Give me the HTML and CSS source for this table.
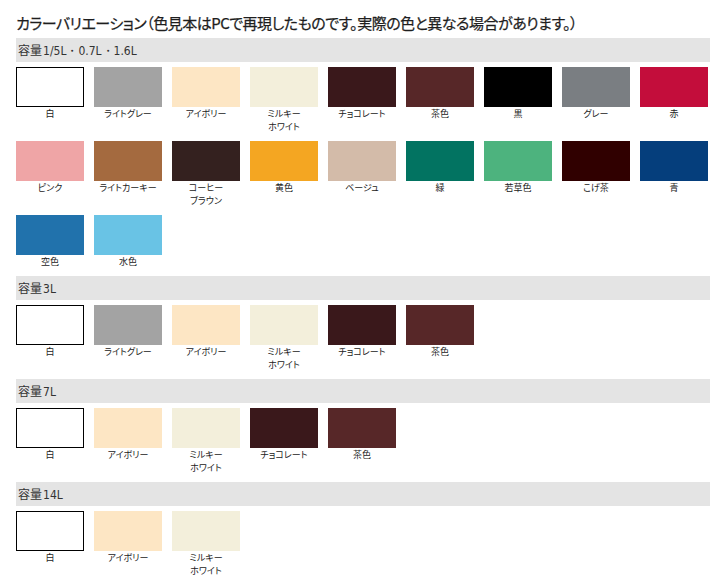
FILE: index.html
```html
<!DOCTYPE html>
<html lang="ja">
<head>
<meta charset="utf-8">
<link rel="stylesheet" href="styles.css">
</head>
<body>
<div class="page">
  <h1 class="title">カラーバリエーション（色見本はPCで再現したものです。実際の色と異なる場合があります。）</h1>

  <section class="group">
    <div class="bar">容量<span class="num">1/5L・0.7L・1.6L</span></div>
    <div class="grid">
      <div class="item"><div class="sw white"></div><div class="lbl">白</div></div>
      <div class="item"><div class="sw lgray"></div><div class="lbl">ライトグレー</div></div>
      <div class="item"><div class="sw ivory"></div><div class="lbl">アイボリー</div></div>
      <div class="item"><div class="sw milky"></div><div class="lbl">ミルキー<br>ホワイト</div></div>
      <div class="item"><div class="sw choco"></div><div class="lbl">チョコレート</div></div>
      <div class="item"><div class="sw brown"></div><div class="lbl">茶色</div></div>
      <div class="item"><div class="sw black"></div><div class="lbl">黒</div></div>
      <div class="item"><div class="sw gray"></div><div class="lbl">グレー</div></div>
      <div class="item"><div class="sw red"></div><div class="lbl">赤</div></div>
      <div class="item"><div class="sw pink"></div><div class="lbl">ピンク</div></div>
      <div class="item"><div class="sw khaki"></div><div class="lbl">ライトカーキー</div></div>
      <div class="item"><div class="sw coffee"></div><div class="lbl">コーヒー<br>ブラウン</div></div>
      <div class="item"><div class="sw yellow"></div><div class="lbl">黄色</div></div>
      <div class="item"><div class="sw beige"></div><div class="lbl">ベージュ</div></div>
      <div class="item"><div class="sw green"></div><div class="lbl">緑</div></div>
      <div class="item"><div class="sw wakakusa"></div><div class="lbl">若草色</div></div>
      <div class="item"><div class="sw koge"></div><div class="lbl">こげ茶</div></div>
      <div class="item"><div class="sw blue"></div><div class="lbl">青</div></div>
      <div class="item"><div class="sw sky"></div><div class="lbl">空色</div></div>
      <div class="item"><div class="sw water"></div><div class="lbl">水色</div></div>
    </div>
  </section>

  <section class="group">
    <div class="bar">容量<span class="num">3L</span></div>
    <div class="grid">
      <div class="item"><div class="sw white"></div><div class="lbl">白</div></div>
      <div class="item"><div class="sw lgray"></div><div class="lbl">ライトグレー</div></div>
      <div class="item"><div class="sw ivory"></div><div class="lbl">アイボリー</div></div>
      <div class="item"><div class="sw milky"></div><div class="lbl">ミルキー<br>ホワイト</div></div>
      <div class="item"><div class="sw choco"></div><div class="lbl">チョコレート</div></div>
      <div class="item"><div class="sw brown"></div><div class="lbl">茶色</div></div>
    </div>
  </section>

  <section class="group">
    <div class="bar">容量<span class="num">7L</span></div>
    <div class="grid">
      <div class="item"><div class="sw white"></div><div class="lbl">白</div></div>
      <div class="item"><div class="sw ivory"></div><div class="lbl">アイボリー</div></div>
      <div class="item"><div class="sw milky"></div><div class="lbl">ミルキー<br>ホワイト</div></div>
      <div class="item"><div class="sw choco"></div><div class="lbl">チョコレート</div></div>
      <div class="item"><div class="sw brown"></div><div class="lbl">茶色</div></div>
    </div>
  </section>

  <section class="group">
    <div class="bar">容量<span class="num">14L</span></div>
    <div class="grid">
      <div class="item"><div class="sw white"></div><div class="lbl">白</div></div>
      <div class="item"><div class="sw ivory"></div><div class="lbl">アイボリー</div></div>
      <div class="item"><div class="sw milky"></div><div class="lbl">ミルキー<br>ホワイト</div></div>
    </div>
  </section>
</div>
</body>
</html>
```

FILE: styles.css
```css
* { box-sizing: border-box; }
html, body { margin: 0; padding: 0; background: #fff; }
body {
  font-family: "Noto Sans CJK JP", "Noto Sans", sans-serif;
  color: #333;
}
.page {
  padding: 12px 15px 0 16px;
  width: 725px;
}
.title {
  margin: 0 0 4px 0;
  font-size: 15px;
  font-weight: normal;
  line-height: 22px;
  color: #1e1e1e;
  font-feature-settings: "palt";
  letter-spacing: -0.5px;
  white-space: nowrap;
  -webkit-text-stroke: 0.25px #1e1e1e;
}
.group {
  margin-bottom: 8px;
}
.bar {
  width: 694px;
  height: 24px;
  background: #e4e4e4;
  padding-left: 2px;
  font-size: 12px;
  line-height: 24px;
  color: #333;
  margin-bottom: 5px;
}
.num {
  font-family: "Liberation Sans Narrow", "DejaVu Sans Condensed", sans-serif;
  font-size: 12px;
  margin-left: 1px;
  font-feature-settings: "palt";
}
.grid {
  display: grid;
  grid-template-columns: repeat(9, 68px);
  column-gap: 10px;
  row-gap: 8px;
}
.item {
  display: flex;
  flex-direction: column;
  align-items: center;
}
.sw {
  width: 68px;
  height: 40px;
}
.lbl {
  font-size: 9px;
  line-height: 13px;
  text-align: center;
  color: #222;
  white-space: nowrap;
  font-feature-settings: "palt";
}
.white { background: #fff; border: 1px solid #000; }
.lgray { background: #a3a3a3; }
.ivory { background: #fde6c4; }
.milky { background: #f3efdb; }
.choco { background: #3a181b; }
.brown { background: #572728; }
.black { background: #000; }
.gray { background: #7a7e82; }
.red { background: #c30d3b; }
.pink { background: #efa5a6; }
.khaki { background: #a46a3f; }
.coffee { background: #34211f; }
.yellow { background: #f4a622; }
.beige { background: #d3bba9; }
.green { background: #027361; }
.wakakusa { background: #4db37e; }
.koge { background: #300000; }
.blue { background: #053e7c; }
.sky { background: #2172ac; }
.water { background: #69c3e5; }
```
